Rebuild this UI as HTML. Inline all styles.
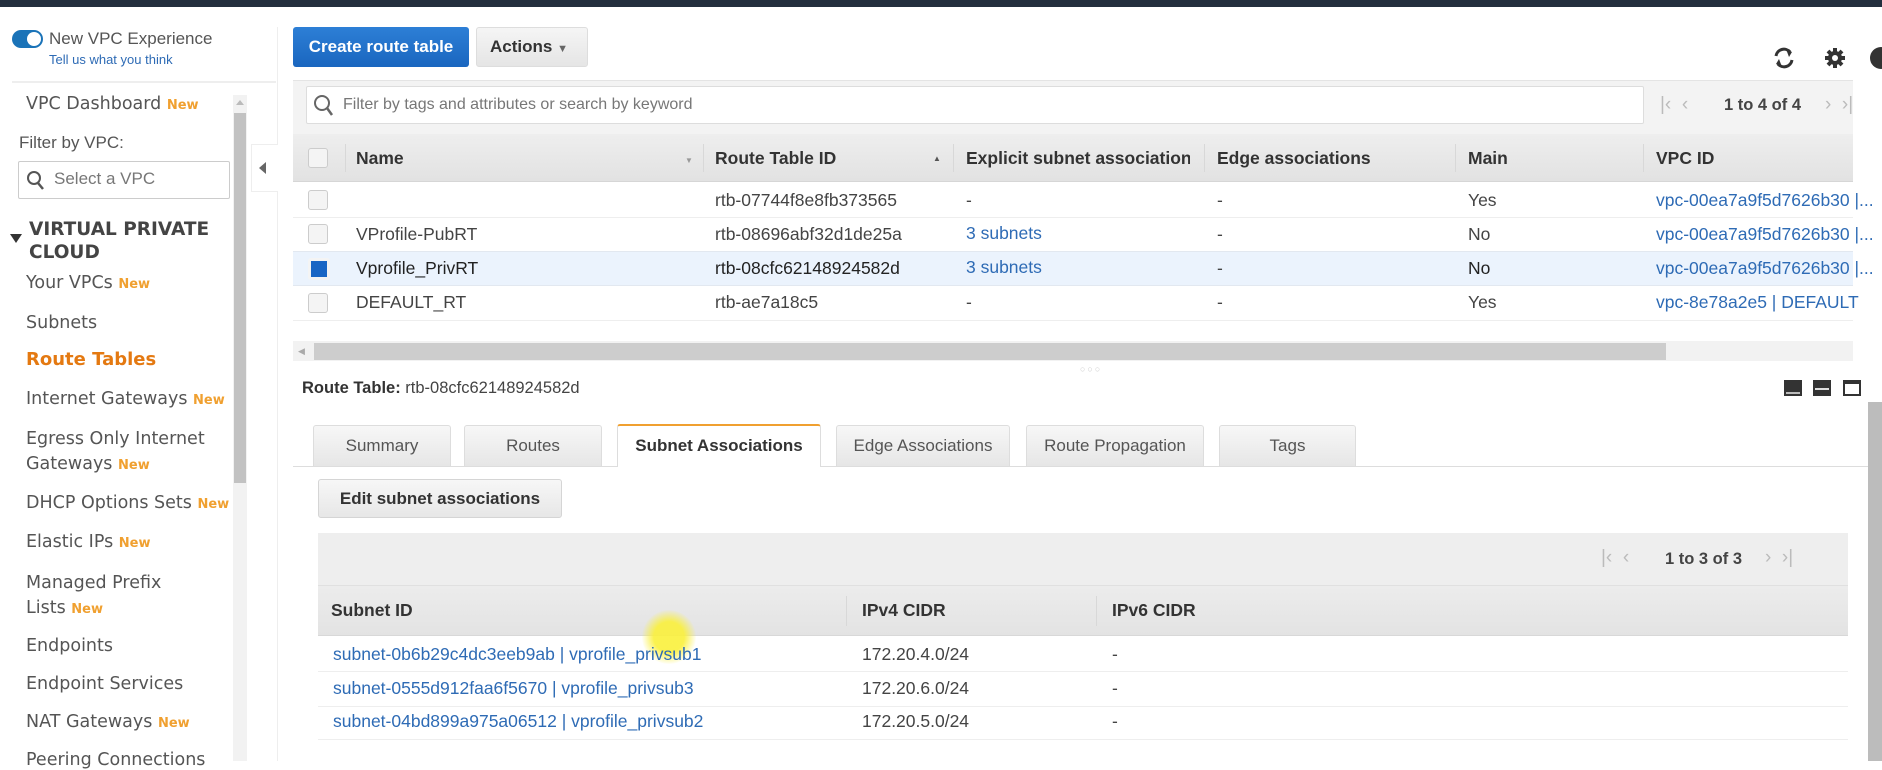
<!DOCTYPE html>
<html><head><meta charset="utf-8"><style>
*{box-sizing:border-box;margin:0;padding:0}
body{width:1882px;height:761px;overflow:hidden;background:#fff;font-family:"Liberation Sans",Arial,sans-serif;color:#444;position:relative}
.a{position:absolute;white-space:nowrap}
.sb{font-family:"DejaVu Sans",Verdana,sans-serif;font-size:17.5px;color:#555}
.new{color:#f0a030;font-weight:bold;font-size:13px;font-family:"DejaVu Sans",sans-serif}
.m{font-size:17.5px;color:#444}
.h{font-size:17.5px;font-weight:bold;color:#333}
.lnk{color:#2e6bb5}
.cb{position:absolute;width:20px;height:20px;border:1px solid #ccc;border-radius:3px;background:#f4f4f4}
.tab{position:absolute;top:425px;height:41px;border:1px solid #ddd;border-bottom:none;background:linear-gradient(#f7f7f7,#e6e6e6);border-radius:3px 3px 0 0;font-size:17px;color:#555;text-align:center;line-height:40px}
.pg{font-size:16px;color:#bbb}
</style></head><body>
<div class="a" style="left:0;top:0;width:1882px;height:7px;background:#232f3e"></div>

<!-- sidebar -->
<div class="a" style="left:12px;top:30px;width:31px;height:18px;border-radius:9px;background:#1a73b8"></div>
<div class="a" style="left:27px;top:32px;width:14px;height:14px;border-radius:7px;background:#fff"></div>
<div class="a" style="left:49px;top:29px;font-size:17px;color:#555">New VPC Experience</div>
<div class="a" style="left:49px;top:52px;font-size:13px;color:#2e6bb5">Tell us what you think</div>
<div class="a" style="left:12px;top:81px;width:264px;height:2px;background:#eee"></div>
<div class="a" style="left:277px;top:27px;width:1px;height:734px;background:#eee"></div>
<div class="a sb" style="left:26px;top:94px">VPC Dashboard <span class="new">New</span></div>
<div class="a" style="left:19px;top:133px;font-size:17px;color:#555">Filter by VPC:</div>
<div class="a" style="left:18px;top:161px;width:212px;height:38px;border:1px solid #ccc;border-radius:2px"></div>
<svg class="a" style="left:26px;top:170px" width="20" height="22"><circle cx="8" cy="8" r="6" fill="none" stroke="#555" stroke-width="2"/><path d="M12 13l5 6" stroke="#555" stroke-width="2.5"/></svg>
<div class="a" style="left:54px;top:169px;font-size:17px;color:#777">Select a VPC</div>
<div class="a" style="left:10px;top:234px;border-left:6px solid transparent;border-right:6px solid transparent;border-top:9px solid #333"></div>
<div class="a sb" style="left:29px;top:218px;font-weight:bold;color:#444;font-size:18.5px;line-height:23px">VIRTUAL PRIVATE<br>CLOUD</div>
<div class="a sb" style="left:26px;top:273px">Your VPCs <span class="new">New</span></div>
<div class="a sb" style="left:26px;top:313px">Subnets</div>
<div class="a sb" style="left:26px;top:349px;color:#e47911;font-weight:bold;font-size:18px">Route Tables</div>
<div class="a sb" style="left:26px;top:389px">Internet Gateways <span class="new">New</span></div>
<div class="a sb" style="left:26px;top:427px;line-height:25px">Egress Only Internet<br>Gateways <span class="new">New</span></div>
<div class="a sb" style="left:26px;top:493px">DHCP Options Sets <span class="new">New</span></div>
<div class="a sb" style="left:26px;top:532px">Elastic IPs <span class="new">New</span></div>
<div class="a sb" style="left:26px;top:571px;line-height:25px">Managed Prefix<br>Lists <span class="new">New</span></div>
<div class="a sb" style="left:26px;top:636px">Endpoints</div>
<div class="a sb" style="left:26px;top:674px">Endpoint Services</div>
<div class="a sb" style="left:26px;top:712px">NAT Gateways <span class="new">New</span></div>
<div class="a sb" style="left:26px;top:750px">Peering Connections</div>
<div class="a" style="left:233px;top:95px;width:14px;height:666px;background:#f2f2f2"></div>
<div class="a" style="left:236px;top:100px;border-left:4px solid transparent;border-right:4px solid transparent;border-bottom:5px solid #bbb"></div>
<div class="a" style="left:234px;top:113px;width:12px;height:370px;background:#c2c2c2"></div>
<div class="a" style="left:251px;top:144px;width:27px;height:48px;border:1px solid #eee;border-right:none;background:#fff"></div>
<div class="a" style="left:259px;top:162px;border-top:6px solid transparent;border-bottom:6px solid transparent;border-right:7px solid #666"></div>

<!-- toolbar -->
<div class="a" style="left:293px;top:27px;width:176px;height:40px;border-radius:3px;background:linear-gradient(#2d7fd6,#1a66bf);color:#fff;font-weight:bold;font-size:17px;text-align:center;line-height:40px">Create route table</div>
<div class="a" style="left:476px;top:27px;width:112px;height:40px;border-radius:3px;border:1px solid #ddd;background:linear-gradient(#f5f5f5,#e5e5e5);color:#333;font-weight:bold;font-size:17px;line-height:38px;padding-left:13px">Actions <span style="font-size:11px;color:#666">&#9660;</span></div>
<svg class="a" style="left:1772px;top:46px" width="24" height="24" viewBox="0 0 24 24"><path d="M4 10a8 8 0 0 1 14-4" fill="none" stroke="#333" stroke-width="3"/><path d="M20 14a8 8 0 0 1-14 4" fill="none" stroke="#333" stroke-width="3"/><path d="M14 3l6 3-3 5z" fill="#333"/><path d="M10 21l-6-3 3-5z" fill="#333"/></svg>
<svg class="a" style="left:1824px;top:47px" width="22" height="22" viewBox="0 0 22 22"><circle cx="11" cy="11" r="7" fill="#333"/><g stroke="#333" stroke-width="4"><path d="M11 1v20M1 11h20M4 4l14 14M18 4L4 18"/></g><circle cx="11" cy="11" r="3" fill="#fff"/></svg>
<div class="a" style="left:1870px;top:47px;width:22px;height:22px;border-radius:11px;background:#333"></div>

<div class="a" style="left:293px;top:80px;width:1560px;height:54px;background:#f3f3f3;border-top:1px solid #e4e4e4"></div>
<div class="a" style="left:306px;top:86px;width:1338px;height:38px;background:#fff;border:1px solid #ddd;border-radius:2px"></div>
<svg class="a" style="left:313px;top:94px" width="22" height="24"><circle cx="9" cy="9" r="7" fill="none" stroke="#666" stroke-width="2"/><path d="M14 14l5 7" stroke="#666" stroke-width="2.5"/></svg>
<div class="a" style="left:343px;top:96px;font-size:16px;color:#777">Filter by tags and attributes or search by keyword</div>
<div class="a pg" style="left:1660px;top:94px;font-size:19px">|&lsaquo;&nbsp;&nbsp;&lsaquo;</div>
<div class="a" style="left:1724px;top:96px;font-size:16.5px;font-weight:bold;color:#444">1 to 4 of 4</div>
<div class="a pg" style="left:1825px;top:94px;font-size:19px">&rsaquo;&nbsp;&nbsp;&rsaquo;|</div>

<!-- table header -->
<div class="a" style="left:293px;top:134px;width:1560px;height:48px;background:linear-gradient(#eee,#e2e2e2);border-bottom:1px solid #d6d6d6"></div>
<div class="cb" style="left:308px;top:148px"></div>
<div class="a" style="left:345px;top:144px;width:1px;height:28px;background:#d8d8d8"></div>
<div class="a h" style="left:356px;top:148px">Name</div>
<div class="a" style="left:685px;top:156px;font-size:8px;color:#999">&#9660;</div>
<div class="a" style="left:703px;top:144px;width:1px;height:28px;background:#d8d8d8"></div>
<div class="a h" style="left:715px;top:148px">Route Table ID</div>
<div class="a" style="left:933px;top:154px;font-size:8px;color:#555">&#9650;</div>
<div class="a" style="left:953px;top:144px;width:1px;height:28px;background:#d8d8d8"></div>
<div class="a h" style="left:966px;top:148px;width:224px;overflow:hidden">Explicit subnet association</div>
<div class="a" style="left:1204px;top:144px;width:1px;height:28px;background:#d8d8d8"></div>
<div class="a h" style="left:1217px;top:148px">Edge associations</div>
<div class="a" style="left:1455px;top:144px;width:1px;height:28px;background:#d8d8d8"></div>
<div class="a h" style="left:1468px;top:148px">Main</div>
<div class="a" style="left:1643px;top:144px;width:1px;height:28px;background:#d8d8d8"></div>
<div class="a h" style="left:1656px;top:148px">VPC ID</div>

<!-- rows -->
<div class="a" style="left:293px;top:217px;width:1560px;height:1px;background:#eee"></div>
<div class="a" style="left:293px;top:251px;width:1560px;height:35px;background:#ebf3fd;border-top:1px solid #e2e8f0;border-bottom:1px solid #e2e8f0"></div>
<div class="a" style="left:293px;top:320px;width:1560px;height:1px;background:#eee"></div>
<div class="cb" style="left:308px;top:190px"></div>
<div class="cb" style="left:308px;top:224px"></div>
<div class="cb" style="left:308px;top:258px;background:#1a66c4;border:3px solid #f4f4f4;width:22px;height:22px"></div>
<div class="cb" style="left:308px;top:293px"></div>

<div class="a m" style="left:715px;top:190px">rtb-07744f8e8fb373565</div>
<div class="a m" style="left:966px;top:190px">-</div><div class="a m" style="left:1217px;top:190px">-</div>
<div class="a m" style="left:1468px;top:190px">Yes</div>
<div class="a m lnk" style="left:1656px;top:190px">vpc-00ea7a9f5d7626b30 |...</div>

<div class="a m" style="left:356px;top:224px">VProfile-PubRT</div>
<div class="a m" style="left:715px;top:224px">rtb-08696abf32d1de25a</div>
<div class="a m lnk" style="left:966px;top:223px">3 subnets</div><div class="a m" style="left:1217px;top:224px">-</div>
<div class="a m" style="left:1468px;top:224px">No</div>
<div class="a m lnk" style="left:1656px;top:224px">vpc-00ea7a9f5d7626b30 |...</div>

<div class="a m" style="left:356px;top:258px;color:#222">Vprofile_PrivRT</div>
<div class="a m" style="left:715px;top:258px;color:#222">rtb-08cfc62148924582d</div>
<div class="a m lnk" style="left:966px;top:257px">3 subnets</div><div class="a m" style="left:1217px;top:258px">-</div>
<div class="a m" style="left:1468px;top:258px;color:#222">No</div>
<div class="a m lnk" style="left:1656px;top:258px">vpc-00ea7a9f5d7626b30 |...</div>

<div class="a m" style="left:356px;top:292px">DEFAULT_RT</div>
<div class="a m" style="left:715px;top:292px">rtb-ae7a18c5</div>
<div class="a m" style="left:966px;top:292px">-</div><div class="a m" style="left:1217px;top:292px">-</div>
<div class="a m" style="left:1468px;top:292px">Yes</div>
<div class="a m lnk" style="left:1656px;top:292px">vpc-8e78a2e5 | DEFAULT</div>

<!-- h scrollbar -->
<div class="a" style="left:293px;top:341px;width:1560px;height:20px;background:#f2f2f2"></div>
<div class="a" style="left:298px;top:346px;font-size:9px;color:#aaa">&#9664;</div>
<div class="a" style="left:314px;top:343px;width:1352px;height:17px;background:#cdcdcd"></div>
<div class="a" style="left:1080px;top:364px;font-size:9px;color:#ccc;letter-spacing:2px">&#9675;&#9675;&#9675;</div>

<!-- detail -->
<div class="a" style="left:302px;top:379px;font-size:16.5px;color:#333"><b>Route Table:</b> <span style="color:#444">rtb-08cfc62148924582d</span></div>
<div class="a" style="left:1784px;top:380px;width:18px;height:16px;background:#333"></div><div class="a" style="left:1786px;top:392px;width:14px;height:2px;background:#bbb"></div>
<div class="a" style="left:1813px;top:380px;width:18px;height:16px;background:#333"></div><div class="a" style="left:1815px;top:388px;width:14px;height:2px;background:#ddd"></div>
<div class="a" style="left:1843px;top:380px;width:18px;height:16px;background:#333"></div><div class="a" style="left:1845px;top:384px;width:14px;height:10px;background:#fff"></div>

<div class="a" style="left:293px;top:466px;width:1575px;height:1px;background:#ddd"></div>
<div class="tab" style="left:313px;width:138px">Summary</div>
<div class="tab" style="left:464px;width:138px">Routes</div>
<div class="tab" style="left:617px;width:204px;height:43px;top:424px;background:#fff;border-top:2px solid #f0a030;color:#333;font-weight:bold">Subnet Associations</div>
<div class="tab" style="left:836px;width:174px">Edge Associations</div>
<div class="tab" style="left:1026px;width:178px">Route Propagation</div>
<div class="tab" style="left:1219px;width:137px">Tags</div>

<div class="a" style="left:318px;top:479px;width:244px;height:39px;border:1px solid #d5d5d5;border-radius:3px;background:linear-gradient(#f7f7f7,#e7e7e7);font-size:17px;font-weight:bold;color:#333;text-align:center;line-height:37px">Edit subnet associations</div>

<div class="a" style="left:318px;top:533px;width:1530px;height:53px;background:#eee;border-bottom:1px solid #e0e0e0"></div>
<div class="a pg" style="left:1601px;top:547px;font-size:19px">|&lsaquo;&nbsp;&nbsp;&lsaquo;</div>
<div class="a" style="left:1665px;top:550px;font-size:16.5px;font-weight:bold;color:#444">1 to 3 of 3</div>
<div class="a pg" style="left:1765px;top:547px;font-size:19px">&rsaquo;&nbsp;&nbsp;&rsaquo;|</div>
<div class="a" style="left:318px;top:586px;width:1530px;height:50px;background:linear-gradient(#ececec,#e3e3e3);border-bottom:1px solid #d8d8d8"></div>
<div class="a h" style="left:331px;top:600px">Subnet ID</div>
<div class="a" style="left:846px;top:596px;width:1px;height:30px;background:#d8d8d8"></div>
<div class="a h" style="left:862px;top:600px">IPv4 CIDR</div>
<div class="a" style="left:1096px;top:596px;width:1px;height:30px;background:#d8d8d8"></div>
<div class="a h" style="left:1112px;top:600px">IPv6 CIDR</div>

<div class="a" style="left:642px;top:610px;width:54px;height:54px;border-radius:50%;background:radial-gradient(circle,rgba(250,240,60,.9) 40%,rgba(250,240,60,0) 72%)"></div>
<div class="a m lnk" style="left:333px;top:644px">subnet-0b6b29c4dc3eeb9ab | vprofile_privsub1</div>
<div class="a m" style="left:862px;top:644px">172.20.4.0/24</div><div class="a m" style="left:1112px;top:644px">-</div>
<div class="a" style="left:318px;top:671px;width:1530px;height:1px;background:#eee"></div>
<div class="a m lnk" style="left:333px;top:678px">subnet-0555d912faa6f5670 | vprofile_privsub3</div>
<div class="a m" style="left:862px;top:678px">172.20.6.0/24</div><div class="a m" style="left:1112px;top:678px">-</div>
<div class="a" style="left:318px;top:706px;width:1530px;height:1px;background:#eee"></div>
<div class="a m lnk" style="left:333px;top:711px">subnet-04bd899a975a06512 | vprofile_privsub2</div>
<div class="a m" style="left:862px;top:711px">172.20.5.0/24</div><div class="a m" style="left:1112px;top:711px">-</div>
<div class="a" style="left:318px;top:739px;width:1530px;height:1px;background:#eee"></div>

<div class="a" style="left:1868px;top:402px;width:14px;height:359px;background:#bcbcbc"></div>
</body></html>
